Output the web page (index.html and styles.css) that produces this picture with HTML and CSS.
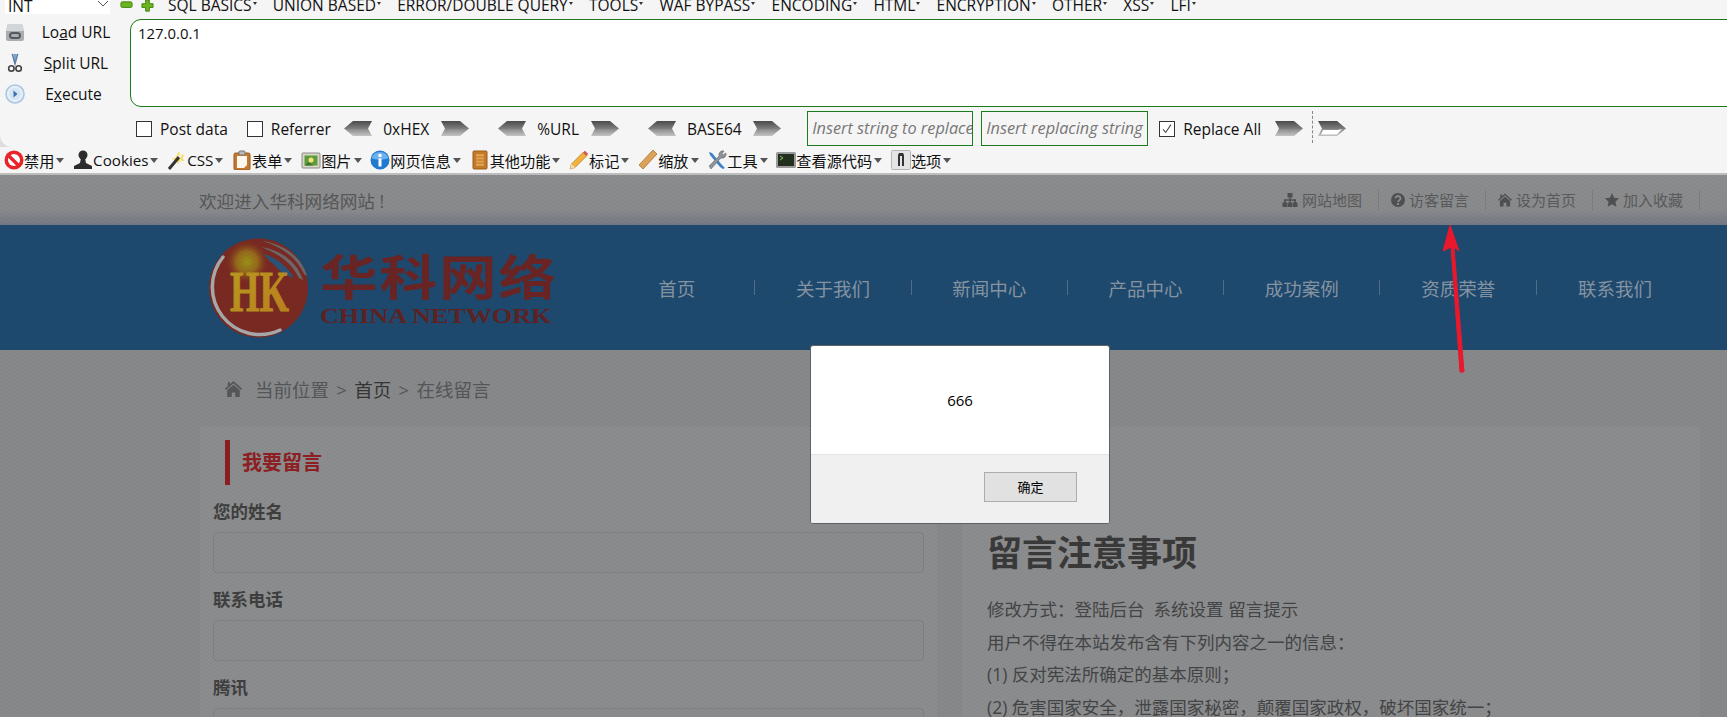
FILE: index.html
```html
<!DOCTYPE html>
<html lang="zh-CN">
<head>
<meta charset="utf-8">
<title>在线留言</title>
<link rel="stylesheet" href="styles.css">
</head>
<body>
<svg class="defs" width="0" height="0" aria-hidden="true">
  <defs>
    <linearGradient id="chev" x1="0" y1="0" x2="0" y2="1">
      <stop offset="0" stop-color="#4a4a4a"/><stop offset=".5" stop-color="#7d7d7d"/><stop offset=".55" stop-color="#8c8c8c"/><stop offset="1" stop-color="#c4c4c4"/>
    </linearGradient>
    <symbol id="chev-l" viewBox="0 0 29 15"><path d="M9 0H28L24 7.5 28 15H9L0 7.5Z" fill="url(#chev)"/></symbol>
    <symbol id="chev-r" viewBox="0 0 29 15"><path d="M1 0H20L29 7.5 20 15H1L5 7.5Z" fill="url(#chev)"/></symbol>
    <radialGradient id="glow"><stop offset="0" stop-color="#9a9118"/><stop offset=".5" stop-color="#96681c"/><stop offset="1" stop-color="#7a2a22" stop-opacity="0"/></radialGradient>
    <linearGradient id="hk" x1="0" y1="0" x2="1" y2="1"><stop offset="0" stop-color="#b8a020"/><stop offset="1" stop-color="#c07a20"/></linearGradient>
  </defs>
</svg>

<header class="browser">
  <section class="hackbar">
    <div class="hb-menu">
      <span class="hb-select">INT<svg class="hb-chevron" viewBox="0 0 12 7"><path d="M1 1l5 5 5-5" fill="none" stroke="#555"/></svg></span>
      <svg class="ic-pm" viewBox="0 0 14 14"><rect x="1" y="2" width="12" height="6" rx="1.5" fill="#6cb51e" stroke="#3f7f10"/></svg>
      <svg class="ic-pm plus" viewBox="0 0 14 14"><path d="M5 0h4v4h4v4H9v4H5V8H1V4h4z" fill="#6cb51e" stroke="#3f7f10"/></svg>
      <span class="m m1">SQL BASICS</span>
      <span class="m m2">UNION BASED</span>
      <span class="m m3">ERROR/DOUBLE QUERY</span>
      <span class="m m4">TOOLS</span>
      <span class="m m5">WAF BYPASS</span>
      <span class="m m6">ENCODING</span>
      <span class="m m7">HTML</span>
      <span class="m m8">ENCRYPTION</span>
      <span class="m m9">OTHER</span>
      <span class="m m10">XSS</span>
      <span class="m m11">LFI</span>
    </div>
    <div class="hb-main">
      <div class="hb-actions">
        <div class="hb-act">
          <svg class="ic20" viewBox="0 0 20 20"><path d="M3 2h14l2 7v8a2 2 0 0 1-2 2H3a2 2 0 0 1-2-2V9z" fill="#a9adb1"/><path d="M3 2h14l2 7H1z" fill="#d3d6d9"/><rect x="5" y="11" width="10" height="5" rx="2.5" fill="none" stroke="#55595d" stroke-width="2"/></svg>
          <span class="hb-label">Lo<u>a</u>d URL</span>
        </div>
        <div class="hb-act">
          <svg class="ic20" viewBox="0 0 20 22"><path d="M7 1l3 11 3-11" fill="#a8c4e0" stroke="#5a7fa8" stroke-width="1.6"/><path d="M10 1v10" stroke="#5a7fa8"/><circle cx="6" cy="17" r="3" fill="none" stroke="#444" stroke-width="1.8"/><circle cx="14" cy="17" r="3" fill="none" stroke="#444" stroke-width="1.8"/></svg>
          <span class="hb-label"><u>S</u>plit URL</span>
        </div>
        <div class="hb-act">
          <svg class="ic20" viewBox="0 0 20 20"><circle cx="10" cy="10" r="9" fill="#e6eff8" stroke="#a9c6e4" stroke-width="1.6"/><circle cx="10" cy="10" r="6" fill="#d5e4f3"/><path d="M8.5 6.5l4 3.5-4 3.5z" fill="#3a6fb0"/></svg>
          <span class="hb-label exec">E<u>x</u>ecute</span>
        </div>
      </div>
      <div class="hb-url">127.0.0.1</div>
    </div>
    <div class="hb-opts">
      <span class="cb"></span><span class="t t-post">Post data</span>
      <span class="cb"></span><span class="t t-ref">Referrer</span>
      <svg class="chev"><use href="#chev-l"/></svg><span class="t t-enc">0xHEX</span><svg class="chev"><use href="#chev-r"/></svg>
      <svg class="chev g29"><use href="#chev-l"/></svg><span class="t t-enc">%URL</span><svg class="chev"><use href="#chev-r"/></svg>
      <svg class="chev g29"><use href="#chev-l"/></svg><span class="t t-enc">BASE64</span><svg class="chev"><use href="#chev-r"/></svg>
      <span class="rep rep1">Insert string to replace</span>
      <span class="rep rep2">Insert replacing string</span>
      <span class="cb on"><svg viewBox="0 0 16 16"><path d="M3.5 8.500l3 3.500 6-9" fill="none" stroke="#444" stroke-width="1.2"/></svg></span>
      <span class="t t-all">Replace All</span>
      <svg class="chev"><use href="#chev-r"/></svg>
      <span class="dash"></span>
      <svg class="chev" viewBox="0 0 29 15"><path d="M1 0H20L29 7.5 20 15H1L5 7.5Z" fill="url(#chev)"/><path d="M6 9H21L25 8 20 13.500H4Z" fill="#fff"/></svg>
    </div>
  </section>
  <nav class="wd">
    <span class="wd-i">
      <svg class="wd-ic" viewBox="0 0 20 20"><circle cx="10" cy="10" r="9.500" fill="#e8242a"/><circle cx="10" cy="10" r="6" fill="#fff"/><path d="M4 5l11 11" stroke="#e8242a" stroke-width="3.4"/></svg>
      <span>禁用</span><i class="tri"></i></span>
    <span class="wd-i">
      <svg class="wd-ic" viewBox="0 0 20 20"><circle cx="10" cy="5" r="4.500" fill="#2c2c2c"/><path d="M8 8h4l1 5 6 3v3H1v-3l6-3z" fill="#2c2c2c"/></svg>
      <span>Cookies</span><i class="tri"></i></span>
    <span class="wd-i">
      <svg class="wd-ic" viewBox="0 0 20 20"><path d="M12 1l1.500 4 4-.5-2 3.500 2 3-4-.5L11 14 9 10.500 5 9l4-2z" fill="#f5df6a"/><path d="M2 19L12 7" stroke="#333" stroke-width="3"/><path d="M12 7l2-2" stroke="#eee" stroke-width="3"/></svg>
      <span>CSS</span><i class="tri"></i></span>
    <span class="wd-i">
      <svg class="wd-ic" viewBox="0 0 20 20"><rect x="2" y="3" width="16" height="17" rx="1.500" fill="#c5792f" stroke="#97581e"/><path d="M5 6h10v9l-3 3H5z" fill="#fbf6ee"/><rect x="7" y="1" width="6" height="4" rx="1" fill="#bbb" stroke="#777"/></svg>
      <span>表单</span><i class="tri"></i></span>
    <span class="wd-i">
      <svg class="wd-ic" viewBox="0 0 20 20"><rect x="1" y="3" width="18" height="15" rx="1" fill="#d8d8c8" stroke="#888"/><rect x="3.500" y="5.500" width="13" height="10" fill="#5f9a3c"/><circle cx="10" cy="10" r="2.500" fill="#f4e27a"/><path d="M3.500 15.500l4-3 5 3z" fill="#3c7226"/></svg>
      <span>图片</span><i class="tri"></i></span>
    <span class="wd-i">
      <svg class="wd-ic" viewBox="0 0 20 20"><circle cx="10" cy="10" r="9.500" fill="#1f7ad0"/><path d="M1.500 8a9 9 0 0 1 17 0c-5 2-12 2-17 0z" fill="#6cb2ee"/><circle cx="10" cy="5.500" r="1.800" fill="#fff"/><rect x="8.500" y="8.500" width="3" height="8" fill="#fff"/></svg>
      <span>网页信息</span><i class="tri"></i></span>
    <span class="wd-i">
      <svg class="wd-ic" viewBox="0 0 20 20"><rect x="3" y="1" width="14" height="18" rx="1" fill="#c97a28" stroke="#9a5a18"/><rect x="5.500" y="3.500" width="9" height="13" fill="#e0a050" stroke="#b06f24" stroke-width=".7"/><path d="M6 7h8M6 10h8M6 13h8" stroke="#b06f24" stroke-width=".7"/></svg>
      <span>其他功能</span><i class="tri"></i></span>
    <span class="wd-i">
      <svg class="wd-ic" viewBox="0 0 20 20"><path d="M1 19l1.500-5L14 2.500l3.500 3.500L6 17.500z" fill="#f2b33d" stroke="#b87a20" stroke-width=".8"/><path d="M14 2.500L16 .8l3.200 3.200-1.700 2z" fill="#d9534f"/><path d="M1 19l1.500-5 3.500 3.500z" fill="#f0dcb8"/></svg>
      <span>标记</span><i class="tri"></i></span>
    <span class="wd-i">
      <svg class="wd-ic" viewBox="0 0 20 20"><path d="M1 15L15 0l4 4L5 19z" fill="#dba25a" stroke="#a87230" stroke-width=".8"/></svg>
      <span>缩放</span><i class="tri"></i></span>
    <span class="wd-i">
      <svg class="wd-ic" viewBox="0 0 20 20"><path d="M2 2l3 1 10 12 3 3-2 1-3-2L3 5z" fill="#3f7fc6"/><path d="M17 1a4 4 0 0 0-5 5L2 16l2 3L14 8a4 4 0 0 0 5-5l-3 2-1-1z" fill="#8d9399" stroke="#5a5f64" stroke-width=".5"/></svg>
      <span>工具</span><i class="tri"></i></span>
    <span class="wd-i">
      <svg class="wd-ic" viewBox="0 0 20 20"><rect x="0" y="2" width="20" height="16" rx="1.500" fill="#9a9a9a"/><rect x="2" y="4" width="16" height="12" fill="#24301f"/><path d="M4 6l3 2-3 2" fill="none" stroke="#8cc06a"/></svg>
      <span>查看源代码</span><i class="tri"></i></span>
    <span class="wd-i">
      <svg class="wd-ic" viewBox="0 0 20 20"><rect x=".5" y=".5" width="19" height="19" rx="1" fill="#e4e4e4" stroke="#b5b5b5"/><path d="M7 16V5l1-2h4l1 2v11h-2V6H9v10z" fill="#333"/></svg>
      <span>选项</span><i class="tri"></i></span>
  </nav>
</header>

<main class="page">
  <div class="topbar">
    <span class="welcome">欢迎进入华科网络网站 !</span>
    <div class="links">
      <a class="lnk"><svg class="fa wide" viewBox="0 0 16 14"><path d="M5.500 0h5v4.500H8.700V6.200H14V9.500h1.500V14h-5V9.500H12.300V7.800H8.700V9.500h1.300V14H6V9.500H7.300V7.800H3.700V9.500H5.500V14H.5V9.500H2V6.200H7.300V4.500H5.500z"/></svg>网站地图</a>
      <a class="lnk"><svg class="fa" viewBox="0 0 14 14"><circle cx="7" cy="7" r="7"/><path d="M4.500 5.300a2.500 2.300 0 1 1 3.800 2C7.500 7.800 7 8 7 9" fill="none" stroke="#8c8d8e" stroke-width="1.800"/><rect x="6" y="10" width="2" height="2" fill="#8c8d8e"/></svg>访客留言</a>
      <a class="lnk"><svg class="fa" viewBox="0 0 15 14"><path d="M7.500 0L15 6.800l-1 1L7.500 2 1 7.800l-1-1L2.500 4.600V1h2v1.800z"/><path d="M7.500 3.300L13 8.200V14H9V10H6V14H2V8.200z"/></svg>设为首页</a>
      <a class="lnk"><svg class="fa" viewBox="0 0 14 14"><path d="M7 0l2.100 4.700 4.900.6-3.600 3.400 1 5L7 11.200 2.600 13.700l1-5L0 5.300l4.900-.6z"/></svg>加入收藏</a>
    </div>
  </div>
  <div class="masthead">
    <svg class="logo" viewBox="0 0 355 100" width="355" height="100" role="img" aria-label="华科网络">
      <circle cx="49.500" cy="50" r="49.500" fill="#7a2a22"/>
      <circle cx="38" cy="24" r="22" fill="url(#glow)"/>
      <path d="M52 9C72 12 88 24 94 42L90 40C82 24 70 16 52 9Z" fill="#6d6f73" opacity=".9"/>
      <path d="M53 3C76 6 93 20 98 38L95 36C88 20 72 8 53 3Z" fill="#6d6f73" opacity=".9"/>
      <path d="M55 16C68 20 78 28 85 40L74 36C68 28 60 24 55 16Z" fill="#2a5578"/>
      <path class="logo-arc" d="M14 19A47.500 47.500 0 0 0 71 92"/>
      <text x="21" y="73" class="logo-hk" textLength="59" lengthAdjust="spacingAndGlyphs">HK</text>
      <text x="92.500" y="57" class="logo-cn" transform="scale(1.2 1)">华科网络</text>
      <text x="92.500" y="85" class="logo-en" transform="scale(1.2 1)" textLength="193">CHINA NETWORK</text>
    </svg>
    <nav class="mainnav">
      <a class="nv">首页</a><a class="nv">关于我们</a><a class="nv">新闻中心</a><a class="nv">产品中心</a><a class="nv">成功案例</a><a class="nv">资质荣誉</a><a class="nv last">联系我们</a>
    </nav>
  </div>
  <div class="crumb">
    <svg class="crumb-ic" viewBox="0 0 15 14"><path d="M7.500 0L15 6.800l-1 1L7.500 2 1 7.800l-1-1L2.500 4.600V1h2v1.800z"/><path d="M7.500 3.300L13 8.200V14H9V10H6V14H2V8.200z"/></svg>
    <span>当前位置 &gt; <b class="crumb-home">首页</b> &gt; 在线留言</span>
  </div>
  <div class="cols">
    <section class="panel form">
      <h2 class="form-title">我要留言</h2>
      <label class="lb">您的姓名</label><div class="ipt"></div>
      <label class="lb">联系电话</label><div class="ipt"></div>
      <label class="lb">腾讯</label><div class="ipt"></div>
    </section>
    <section class="panel notes">
      <h1 class="notes-title">留言注意事项</h1>
      <p class="ln">修改方式：登陆后台&nbsp; 系统设置 留言提示</p>
      <p class="ln">用户不得在本站发布含有下列内容之一的信息：</p>
      <p class="ln">(1) 反对宪法所确定的基本原则；</p>
      <p class="ln">(2) 危害国家安全，泄露国家秘密，颠覆国家政权，破坏国家统一；</p>
    </section>
  </div>
  <div class="dither"></div>
</main>

<svg class="redarrow" viewBox="0 0 40 160" width="40" height="160"><path d="M17 0L26 26 21 22 31 147 27 147 18 22 10 26Z" fill="#e8192c" stroke="#e8192c" stroke-linejoin="round"/></svg>

<div class="dialog" role="alertdialog">
  <div class="dlg-body">666</div>
  <div class="dlg-foot"><span class="dlg-btn">确定</span></div>
</div>
</body>
</html>
```

FILE: styles.css
```css
* { box-sizing: border-box; }
html, body { margin: 0; height: 717px; overflow: hidden; }
body {
  position: relative;
  background: #8a8b8c;
  font-family: "Open Sans", "Noto Sans CJK SC", sans-serif;
  color: #000;
}
.defs { position: absolute; }
svg { display: block; flex: none; }

/* browser chrome */
.browser { height: 175px; background: #dcdcdc; border-bottom: 2px solid #bdbdbd; }
.hackbar { height: 147px; background: #f5f5f5; border-bottom-left-radius: 12px; overflow: hidden; }
.hb-menu { height: 19px; display: flex; align-items: flex-start; font-size: 15.500px; line-height: 14px; color: #111; }
.hb-select { width: 105px; height: 14px; margin-left: 5px; padding-left: 3px; background: #fff; position: relative; line-height: 12px; overflow: hidden; }
.hb-chevron { position: absolute; right: 1px; top: 0; width: 12px; height: 7px; }
.ic-pm { width: 13px; height: 13px; margin-left: 10px; }
.ic-pm.plus { margin-left: 8px; }
.m { margin-top: -2px; white-space: nowrap; }
.m::after { content: ""; display: inline-block; width: 0; height: 0; margin-left: 1px; vertical-align: 6px; border: 2.500px solid transparent; border-top: 3px solid #333; border-bottom: 0; }
.m1 { margin-left: 14px; }
.m + .m { margin-left: 16.200px; }

.hb-main { display: flex; height: 88px; }
.hb-actions { width: 130px; flex: none; margin-top: -3px; }
.hb-act { height: 31px; display: flex; align-items: center; padding-left: 5px; }
.ic20 { width: 20px; height: 20px; }
.hb-label { width: 102px; text-align: center; font-size: 15.500px; color: #111; white-space: nowrap; }
.hb-label.exec { width: 97px; }
.hb-url { flex: 1; margin-right: -20px; background: #fff; border: 1px solid #1b7a1b; border-radius: 11px; padding: 3px 7px; font-size: 14.900px; line-height: 20px; color: #111; }

.hb-opts { display: flex; align-items: center; height: 35px; margin-top: 4px; padding-left: 136px; font-size: 15.500px; color: #111; }
.cb { width: 16px; height: 16px; border: 1px solid #333; background: #fff; flex: none; margin-right: 8px; }
.cb svg { width: 14px; height: 14px; }
.t { white-space: nowrap; }
.t-post { margin-right: 19px; }
.t-ref { margin-right: 13px; }
.t-enc { margin: 0 10.500px; }
.chev { width: 29px; height: 15px; }
.g29 { margin-left: 29px; }
.rep { width: 166px; height: 35px; border: 1px solid #1b7a1b; background: #f5f5f5; margin-left: 26px; padding-left: 4px; font-style: italic; font-size: 16.300px; line-height: 33px; color: #777; white-space: nowrap; overflow: hidden; }
.rep2 { width: 167px; margin-left: 8px; margin-right: 11px; }
.t-all { margin-right: 13px; }
.dash { width: 0; height: 32px; border-left: 1px dashed #888; margin: 0 4px 3px 9px; }

.wd { height: 26px; background: #f5f5f5; display: flex; align-items: center; padding-left: 4px; gap: 8.700px; font-size: 15.200px; color: #111; white-space: nowrap; }
.wd-i { display: flex; align-items: center; }
.wd-ic { width: 20px; height: 20px; }
.tri { width: 0; height: 0; margin-left: 2px; border: 4px solid transparent; border-top: 5px solid #555; border-bottom: 0; }

/* dimmed page */
.page { position: relative; height: 542px; overflow: hidden; }
.topbar { height: 50px; display: flex; align-items: center; justify-content: space-between; padding: 0 27px 0 199px; background: linear-gradient(#8c8d8e 0, #8a8b8d 70%, #767985 100%); }
.welcome { font-size: 17.600px; color: #575859; }
.links { display: flex; }
.lnk { display: flex; align-items: center; gap: 4px; height: 20px; padding: 0 16px 0 12px; border-right: 1px solid #7d7e80; font-size: 15px; line-height: 20px; color: #5a5b5c; white-space: nowrap; }
.fa { width: 14px; height: 14px; fill: #505152; }
.fa.wide { width: 16px; }

.masthead { height: 125px; background: #1e4a6f; display: flex; align-items: center; padding-left: 209px; }
.logo { width: 355px; height: 100px; margin-right: 35px; }
.logo-arc { fill: none; stroke: #a8a9ab; stroke-width: 3.500px; stroke-linecap: round; }
.logo-hk { font: 700 58px "Liberation Serif", serif; fill: url(#hk); stroke: #b8921f; stroke-width: .8px; }
.logo-cn { font: 700 48px "Noto Sans CJK SC", sans-serif; fill: #6b2424; letter-spacing: 1.600px; }
.logo-en { font: 700 22px "Liberation Serif", serif; fill: #5e2224; }
.mainnav { display: flex; }
.nv { width: 156.300px; height: 15px; display: flex; align-items: center; justify-content: center; border-right: 1px solid #51708c; font-size: 18.500px; color: #8795a3; white-space: nowrap; }
.nv.last { border-right: 0; }

.crumb { height: 77px; display: flex; align-items: center; gap: 12px; padding-left: 224px; font-size: 18.500px; word-spacing: 2.500px; color: #565758; background: #87898a; }
.crumb-ic { width: 19px; height: 16px; fill: #565758; }
.crumb-home { font-weight: 400; color: #363636; }

.cols { display: flex; gap: 25px; padding-left: 200px; background: #87898a; }
.panel { background: #8c8d8e; height: 300px; }
.form { width: 737px; padding-left: 13px; }
.form-title { margin: 13px 0 14px 12px; height: 45px; border-left: 5px solid #8c1f23; padding-left: 12px; font-size: 20px; line-height: 45px; font-weight: 700; color: #8e2024; }
.lb { display: block; height: 24px; margin-bottom: 9px; font-size: 17.500px; line-height: 24px; font-weight: 700; color: #3f3f3f; }
.ipt { width: 711px; height: 41px; margin-bottom: 14px; border: 1px solid #808182; border-radius: 4px; background: #8b8c8d; }
.notes { width: 738px; padding-left: 25px; }
.notes-title { margin: 101px 0 15px; font-size: 35px; line-height: 50px; font-weight: 700; color: #3a3a3a; }
.ln { margin: 0; font-size: 17.500px; line-height: 32.500px; color: #444546; white-space: nowrap; }

.dither { position: absolute; inset: 0; background-image: repeating-conic-gradient(rgba(0,0,0,.03) 0 25%, transparent 0 50%); background-size: 4px 4px; pointer-events: none; }

/* overlays */
.redarrow { position: absolute; left: 1433px; top: 225px; }
.dialog { position: absolute; left: 810px; top: 345px; width: 300px; height: 179px; background: #fff; border: 1px solid #5f6266; border-radius: 3px; overflow: hidden; }
.dlg-body { height: 108px; display: flex; align-items: center; justify-content: center; font-size: 15px; color: #000; }
.dlg-foot { height: 69px; background: #f0f0f0; border-top: 1px solid #e3e3e3; display: flex; justify-content: flex-end; padding: 17px 32px 0 0; }
.dlg-btn { width: 93px; height: 30px; background: #e1e1e1; border: 1px solid #adadad; font-size: 13px; line-height: 28px; text-align: center; color: #000; }
```
